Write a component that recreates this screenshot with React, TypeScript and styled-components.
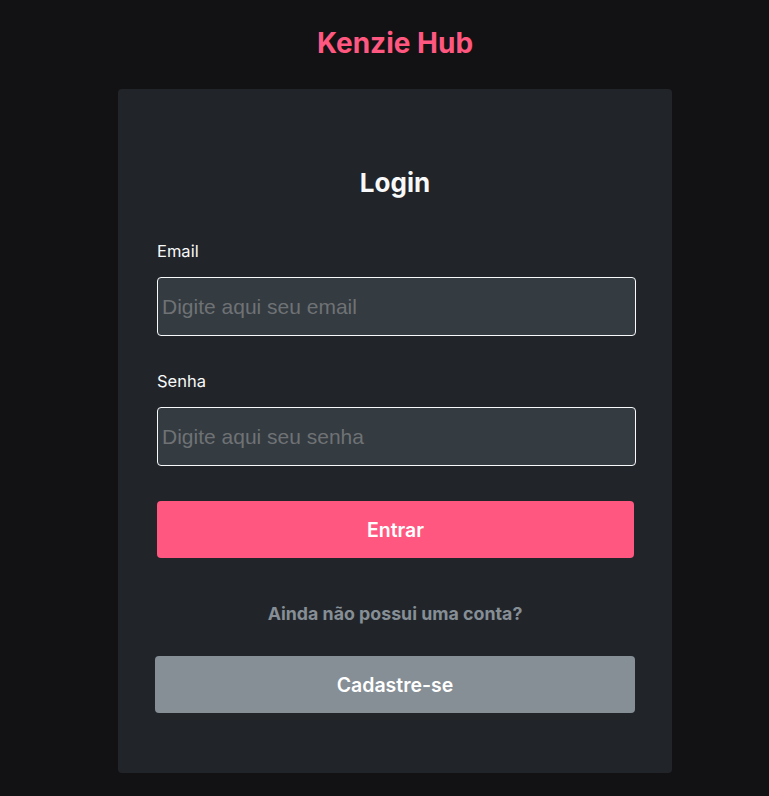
import React from "react";
import styled, { createGlobalStyle } from "styled-components";

const GlobalStyle = createGlobalStyle`
  * { box-sizing: border-box; }
  body {
    margin: 0;
    background: #121214;
    font-family: Inter, "Noto Sans", sans-serif;
  }
`;

const Page = styled.main`
  min-height: 796px;
  padding: 27px 0 0 21px;
  display: flex;
  flex-direction: column;
  align-items: center;
`;

const Brand = styled.h1`
  margin: 0;
  font-size: 28px;
  line-height: 32px;
  font-weight: 700;
  color: #ff577f;
`;

const Card = styled.section`
  margin-top: 30px;
  width: 554px;
  background: #212529;
  border-radius: 4px;
  padding: 79px 36px 60px 39px;
  display: flex;
  flex-direction: column;
`;

const Title = styled.h2`
  margin: 0 0 44px;
  padding-right: 3px;
  text-align: center;
  font-size: 26px;
  line-height: 30px;
  font-weight: 700;
  color: #f8f9fa;
`;

const Form = styled.form`
  display: flex;
  flex-direction: column;
`;

const Label = styled.label<{ $top?: number }>`
  margin-top: ${(p) => p.$top ?? 0}px;
  font-size: 16.5px;
  line-height: 18px;
  color: #f8f9fa;
`;

const Input = styled.input`
  margin-top: 17px;
  width: 479px;
  height: 59px;
  background: #343b41;
  border: 1px solid #f8f9fa;
  border-radius: 4px;
  padding: 1px 4px;
  font-family: "Liberation Sans", Arial, sans-serif;
  font-size: 21px;
  color: #f8f9fa;
  outline: none;
  &::placeholder {
    color: #6f7275;
  }
`;

const Button = styled.button<{ $variant: "primary" | "grey" }>`
  border: none;
  border-radius: 4px;
  height: 57px;
  font-family: Inter, "Noto Sans", sans-serif;
  font-size: 19.5px;
  font-weight: 600;
  color: #ffffff;
  cursor: pointer;
  background: ${(p) => (p.$variant === "primary" ? "#ff577f" : "#868e96")};
  width: ${(p) => (p.$variant === "primary" ? "477px" : "480px")};
  margin-left: ${(p) => (p.$variant === "primary" ? "0" : "-2px")};
`;

const Hint = styled.p`
  margin: 46px 0 32px;
  padding-right: 3px;
  text-align: center;
  font-size: 17.8px;
  line-height: 20px;
  font-weight: 700;
  color: #868e96;
`;

const SubmitRow = styled.div`
  margin-top: 35px;
  display: flex;
`;

export default function App() {
  return (
    <>
      <GlobalStyle />
      <Page>
        <Brand>Kenzie Hub</Brand>
        <Card>
          <Title>Login</Title>
          <Form onSubmit={(e) => e.preventDefault()}>
            <Label htmlFor="email">Email</Label>
            <Input id="email" type="email" placeholder="Digite aqui seu email" />
            <Label htmlFor="senha" $top={36}>
              Senha
            </Label>
            <Input id="senha" type="password" placeholder="Digite aqui seu senha" />
            <SubmitRow>
              <Button type="submit" $variant="primary">
                Entrar
              </Button>
            </SubmitRow>
          </Form>
          <Hint>Ainda não possui uma conta?</Hint>
          <Button type="button" $variant="grey">
            Cadastre-se
          </Button>
        </Card>
      </Page>
    </>
  );
}
